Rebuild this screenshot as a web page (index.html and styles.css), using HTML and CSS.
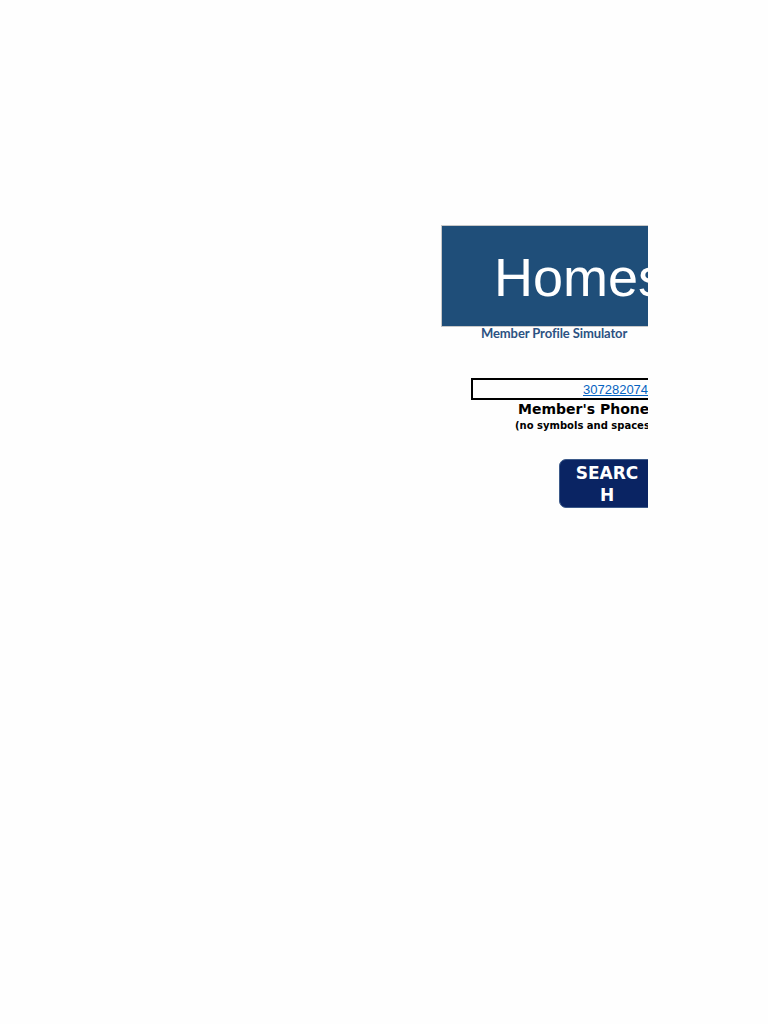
FILE: index.html
```html
<!DOCTYPE html>
<html>
<head>
<meta charset="utf-8">
<link rel="stylesheet" href="styles.css">
</head>
<body>
<div class="sheet">
  <div class="banner"><span class="banner-title">Homestead</span></div>
  <div class="subtitle">Member Profile Simulator</div>
  <div class="phone-box"><a class="phone-link" href="#">3072820745</a></div>
  <div class="phone-label">Member's Phone Number</div>
  <div class="phone-hint">(no symbols and spaces)</div>
  <div class="search-btn">SEARCH</div>
</div>
</body>
</html>
```

FILE: styles.css
```css
html, body {
  margin: 0;
  padding: 0;
  background: #fefefe;
}
.sheet {
  width: 648px;
  height: 1024px;
  overflow: hidden;
  position: relative;
}
.banner {
  margin-left: 441px;
  margin-top: 225px;
  width: 320px;
  height: 102px;
  background: #1f4e79;
  border: 1px solid #c8c8c8;
  box-sizing: border-box;
  display: flex;
  align-items: center;
  padding-left: 52px;
  white-space: nowrap;
}
.banner-title {
  font-family: "Liberation Sans", Arial, sans-serif;
  font-size: 54px;
  color: #ffffff;
  line-height: 1;
  margin-top: 1px;
}
.subtitle {
  margin-left: 481px;
  margin-top: 0px;
  font-family: Lato, "Liberation Sans", sans-serif;
  font-weight: bold;
  font-size: 13px;
  line-height: 13px;
  letter-spacing: -0.1px;
  color: #2c5282;
  white-space: nowrap;
}
.phone-box {
  margin-left: 471px;
  margin-top: 38px;
  width: 300px;
  height: 22px;
  border: 2px solid #000;
  box-sizing: border-box;
  padding-left: 110px;
  display: flex;
  align-items: center;
  white-space: nowrap;
}
.phone-link {
  font-family: "Liberation Sans", Arial, sans-serif;
  font-size: 13px;
  color: #0563c1;
  text-decoration: underline;
}
.phone-label {
  margin-left: 518px;
  margin-top: 1px;
  font-family: "DejaVu Sans", sans-serif;
  font-weight: bold;
  font-size: 14px;
  line-height: 17px;
  color: #000;
  white-space: nowrap;
}
.phone-hint {
  margin-left: 515px;
  margin-top: 1px;
  font-family: "DejaVu Sans", sans-serif;
  font-weight: bold;
  font-size: 10px;
  line-height: 13px;
  color: #000;
  white-space: nowrap;
}
.search-btn {
  margin-left: 559px;
  margin-top: 27px;
  width: 96px;
  height: 49px;
  box-sizing: border-box;
  padding: 2px 12px 0;
  background: #0a2463;
  border: 1px solid #3c5a8a;
  border-radius: 7px;
  font-family: "DejaVu Sans", sans-serif;
  font-weight: bold;
  font-size: 17px;
  line-height: 22px;
  color: #fff;
  text-align: center;
  word-break: break-all;
}
```
